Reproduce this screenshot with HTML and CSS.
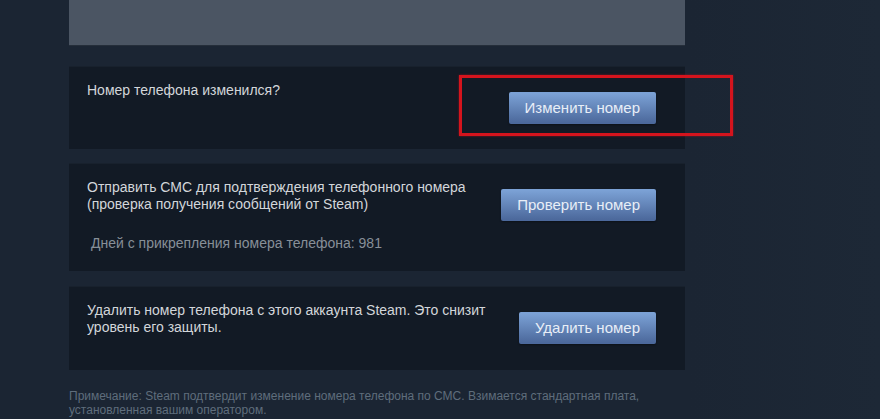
FILE: index.html
```html
<!DOCTYPE html>
<html lang="ru">
<head>
<meta charset="utf-8">
<title>Телефон</title>
<link rel="stylesheet" href="styles.css">
</head>
<body>
<div class="page">
  <div class="column">
    <div class="top-panel"></div>

    <div class="card card-first">
      <div class="row">
        <div class="text">Номер телефона изменился?</div>
        <a class="btn">Изменить номер</a>
      </div>
    </div>

    <div class="card card-verify">
      <div class="row">
        <div class="text">Отправить СМС для подтверждения телефонного номера<br>(проверка получения сообщений от Steam)</div>
        <a class="btn">Проверить номер</a>
      </div>
      <div class="days">Дней с прикрепления номера телефона: 981</div>
    </div>

    <div class="card card-remove">
      <div class="row">
        <div class="text">Удалить номер телефона с этого аккаунта Steam. Это снизит<br>уровень его защиты.</div>
        <a class="btn">Удалить номер</a>
      </div>
    </div>

    <div class="note">Примечание: Steam подтвердит изменение номера телефона по СМС. Взимается стандартная плата,<br>установленная вашим оператором.</div>
  </div>
  <div class="highlight"></div>
</div>
</body>
</html>
```

FILE: styles.css
```css
html, body {
  margin: 0;
  padding: 0;
}
body {
  background: #1b2533;
  font-family: "Liberation Sans", Arial, sans-serif;
  width: 880px;
  height: 419px;
  overflow: hidden;
}
.page {
  position: relative;
  height: 419px;
  background: linear-gradient(to right, #1b2533 0, #1b2533 690px, #1d2836 880px);
}
.column {
  width: 616px;
  margin-left: 69px;
  display: flex;
  flex-direction: column;
}
.top-panel {
  height: 46px;
  background: #4b5563;
  border-bottom: 1px solid #252e3a;
  box-sizing: border-box;
}
.card {
  background: #121a25;
  padding: 15px 29px 25px 18px;
  border-top: 1px solid #18212d;
  box-sizing: border-box;
}
.card-first {
  margin-top: 20px;
  height: 83px;
}
.card-verify {
  margin-top: 14px;
  padding-bottom: 19px;
  height: 108px;
}
.card-remove {
  margin-top: 15px;
  height: 84px;
}
.row {
  display: flex;
  align-items: flex-start;
  justify-content: space-between;
  gap: 20px;
}
.text {
  color: #d2d6da;
  font-size: 14px;
  line-height: 17px;
}
.btn {
  flex: none;
  margin-top: 10px;
  height: 32px;
  line-height: 32px;
  padding: 0 16px;
  font-size: 15px;
  color: #e8eef7;
  border-radius: 2px;
  background: linear-gradient(to bottom, #7ba1d5 5%, #4c699c 95%);
  box-shadow: 0 1px 2px rgba(0, 0, 0, 0.35);
  white-space: nowrap;
  cursor: pointer;
}
.days {
  margin-top: 13px;
  padding-left: 4px;
  color: #878f98;
  font-size: 14px;
  line-height: 18px;
}
.note {
  margin-top: 19px;
  color: #5f6d7c;
  font-size: 12px;
  line-height: 14px;
}
.highlight {
  position: absolute;
  left: 459px;
  top: 75px;
  width: 274px;
  height: 61px;
  border: 3px solid #d4141d;
  box-sizing: border-box;
  box-shadow: 0 0 2px rgba(212, 20, 29, 0.6);
}
```
